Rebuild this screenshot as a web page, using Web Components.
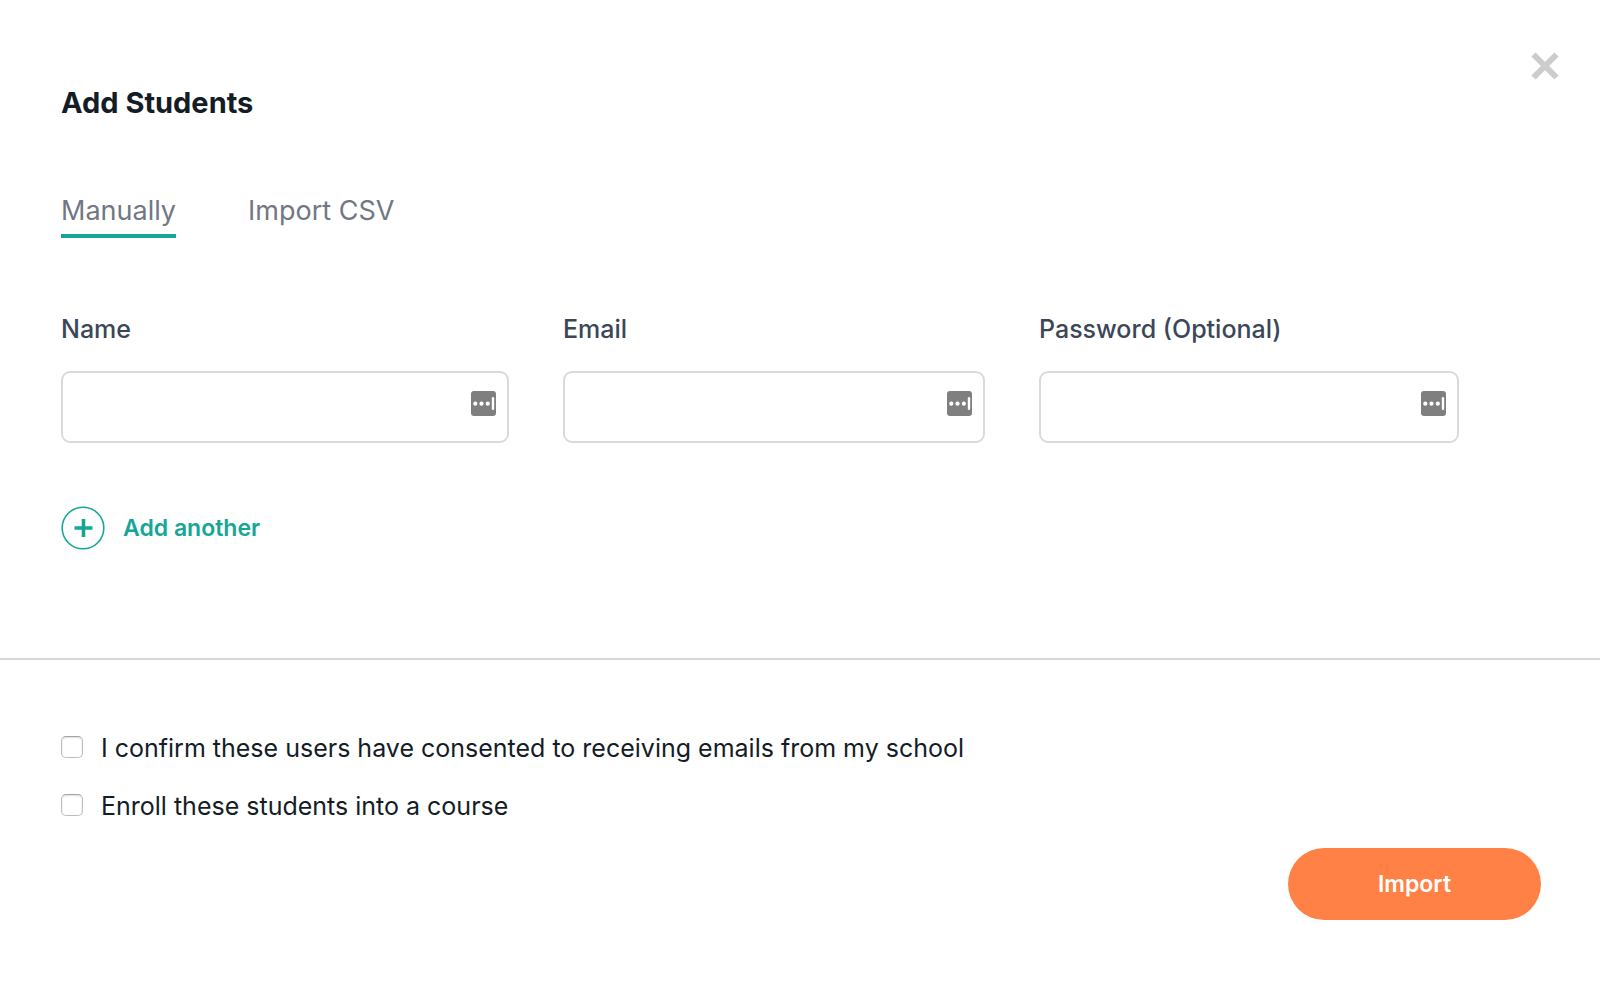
<!DOCTYPE html>
<html lang="en">
<head>
  <meta charset="utf-8">
  <meta name="viewport" content="width=device-width, initial-scale=1">
  <title>Add Students</title>
  <style>
    body {
      margin: 0;
      background: #fff;
      color: #141d26;
      font: 400 25px/32px Inter, "Open Sans", sans-serif;
    }
  </style>
</head>
<body>
  <add-students>
    <modal-header slot="header">Add Students</modal-header>
    <tab-list slot="tabs">
      <tab-item selected>Manually</tab-item>
      <tab-item>Import CSV</tab-item>
    </tab-list>
    <text-field slot="fields" type="text" label="Name"></text-field>
    <text-field slot="fields" type="email" label="Email"></text-field>
    <text-field slot="fields" type="password" label="Password (Optional)"></text-field>
    <add-button slot="add">Add another</add-button>
    <check-option slot="options">I confirm these users have consented to receiving emails from my school</check-option>
    <check-option slot="options">Enroll these students into a course</check-option>
    <primary-button slot="action">Import</primary-button>
  </add-students>

  <script>
    class BaseElement extends HTMLElement {
      constructor() {
        super();
        this.attachShadow({ mode: 'open' });
      }

      connectedCallback() {
        if (this.shadowRoot.childNodes.length) return;
        const template = document.createElement('template');
        template.innerHTML = this.render();
        this.shadowRoot.appendChild(template.content.cloneNode(true));
      }
    }

    class AddStudents extends BaseElement {
      render() {
        return `
          <style>
            :host { display: block; }
            .body { padding: 73px 60px 108px 61px; }
            .fields {
              display: grid;
              grid-template-columns: 448fr 422fr 420fr;
              gap: 54px;
              margin: 75px 81px 63px 0;
            }
            .footer {
              display: flex;
              flex-direction: column;
              gap: 26px;
              padding: 72px 59px 60px 61px;
              border-top: 2px solid #d8d8d8;
            }
            .action { display: flex; justify-content: flex-end; }
          </style>
          <slot name="header"></slot>
          <main class="body">
            <slot name="tabs"></slot>
            <div class="fields"><slot name="fields"></slot></div>
            <slot name="add"></slot>
          </main>
          <footer class="footer">
            <slot name="options"></slot>
            <div class="action"><slot name="action"></slot></div>
          </footer>
        `;
      }
    }

    class ModalHeader extends BaseElement {
      render() {
        return `
          <style>
            :host {
              display: flex;
              justify-content: space-between;
              align-items: flex-start;
              padding: 52px 41px 0 61px;
            }
            h1 { margin: 35px 0 0; font-size: 29px; font-weight: 700; line-height: 32px; }
            button { padding: 0; border: 0; background: none; cursor: pointer; }
            svg { display: block; }
          </style>
          <h1><slot></slot></h1>
          <button type="button" aria-label="Close">
            <svg width="28" height="28" viewBox="0 0 28 28" stroke="#ccc" stroke-width="6">
              <path d="M2.5 2.5l23 23M25.5 2.5l-23 23"/>
            </svg>
          </button>
        `;
      }
    }

    class TabList extends BaseElement {
      render() {
        return `
          <style>
            :host { display: flex; gap: 72px; }
          </style>
          <slot></slot>
        `;
      }
    }

    class TabItem extends BaseElement {
      render() {
        return `
          <style>
            :host { display: block; }
            button {
              display: block;
              padding: 0 0 4px;
              border: 0;
              border-bottom: 4px solid transparent;
              background: none;
              color: #717883;
              font: inherit;
              font-size: 27px;
              line-height: 38px;
              cursor: pointer;
            }
            :host([selected]) button { border-color: #16a698; }
          </style>
          <button type="button"><slot></slot></button>
        `;
      }
    }

    class TextField extends BaseElement {
      render() {
        return `
          <style>
            :host { display: block; min-width: 0; }
            label { display: block; margin-bottom: 26px; color: #3b4758; font-weight: 500; }
            .control { position: relative; }
            input {
              display: block;
              box-sizing: border-box;
              width: 100%;
              height: 72px;
              padding: 0 52px 0 16px;
              border: 2px solid #dadada;
              border-radius: 9px;
              background: #fff;
              color: inherit;
              font: inherit;
            }
            svg { position: absolute; top: 20px; right: 13px; }
          </style>
          <label for="field">${this.getAttribute('label')}</label>
          <div class="control">
            <input id="field" type="${this.getAttribute('type')}">
            <svg width="25" height="25" viewBox="0 0 25 25" aria-hidden="true">
              <rect width="25" height="25" rx="3" fill="#7f7f7f"/>
              <g fill="#fff">
                <circle cx="4.3" cy="12.7" r="2.1"/>
                <circle cx="10.5" cy="12.7" r="2.1"/>
                <circle cx="16.8" cy="12.7" r="2.1"/>
                <rect x="20.8" y="6" width="2.4" height="13" rx="1.2"/>
              </g>
            </svg>
          </div>
        `;
      }
    }

    class AddButton extends BaseElement {
      render() {
        return `
          <style>
            :host { display: flex; }
            button {
              display: flex;
              align-items: center;
              gap: 18px;
              padding: 0;
              border: 0;
              background: none;
              color: #16a698;
              font: inherit;
              font-size: 23px;
              font-weight: 600;
              cursor: pointer;
            }
          </style>
          <button type="button">
            <svg width="44" height="44" viewBox="0 0 44 44" fill="none" stroke="currentColor" aria-hidden="true">
              <circle cx="22" cy="22" r="20.8" stroke-width="1.6"/>
              <path d="M22.5 13v18M13.5 22h18" stroke-width="3.6"/>
            </svg>
            <slot></slot>
          </button>
        `;
      }
    }

    class CheckOption extends BaseElement {
      render() {
        return `
          <style>
            :host { display: flex; }
            label { display: flex; align-items: flex-start; gap: 18px; }
            input {
              appearance: none;
              flex: none;
              box-sizing: border-box;
              width: 22px;
              height: 22px;
              margin: 4px 0 0;
              border: 1px solid #bdbdbd;
              border-top-color: #a3a3a3;
              border-radius: 5px;
              background: #fff;
              box-shadow: inset 0 1px 2px #ddd;
            }
            input:checked { background: #16a698; }
          </style>
          <label><input type="checkbox"><span><slot></slot></span></label>
        `;
      }
    }

    class PrimaryButton extends BaseElement {
      render() {
        return `
          <style>
            :host { display: block; }
            button {
              min-width: 253px;
              height: 72px;
              padding: 0 40px;
              border: 0;
              border-radius: 36px;
              background: #ff8146;
              color: #fff;
              font: inherit;
              font-size: 23px;
              font-weight: 600;
              cursor: pointer;
            }
          </style>
          <button type="button"><slot></slot></button>
        `;
      }
    }

    customElements.define('add-students', AddStudents);
    customElements.define('modal-header', ModalHeader);
    customElements.define('tab-list', TabList);
    customElements.define('tab-item', TabItem);
    customElements.define('text-field', TextField);
    customElements.define('add-button', AddButton);
    customElements.define('check-option', CheckOption);
    customElements.define('primary-button', PrimaryButton);
  </script>
</body>
</html>
